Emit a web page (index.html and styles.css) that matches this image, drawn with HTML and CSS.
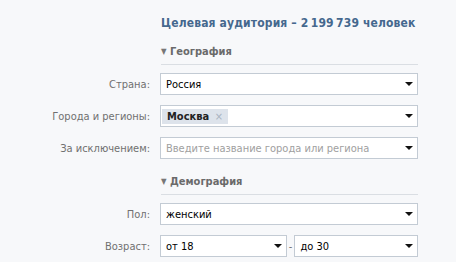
FILE: index.html
```html
<!DOCTYPE html>
<html lang="ru">
<head>
<meta charset="utf-8">
<link rel="stylesheet" href="styles.css">
</head>
<body>
<div class="page">
  <div class="title">Целевая аудитория – 2&thinsp;199&thinsp;739 человек</div>

  <div class="section">
    <div class="section-head"><span class="tri">▼</span> География</div>
    <div class="row">
      <div class="label">Страна:</div>
      <div class="select"><span class="val">Россия</span><span class="arrow"></span></div>
    </div>
    <div class="row">
      <div class="label">Города и регионы:</div>
      <div class="select"><span class="token">Москва <span class="x">×</span></span><span class="arrow"></span></div>
    </div>
    <div class="row">
      <div class="label">За исключением:</div>
      <div class="select"><span class="val ph">Введите название города или региона</span><span class="arrow"></span></div>
    </div>
  </div>

  <div class="section">
    <div class="section-head"><span class="tri">▼</span> Демография</div>
    <div class="row">
      <div class="label">Пол:</div>
      <div class="select"><span class="val">женский</span><span class="arrow"></span></div>
    </div>
    <div class="row">
      <div class="label">Возраст:</div>
      <div class="pair">
        <div class="select small"><span class="val">от 18</span><span class="arrow"></span></div>
        <span class="dash">-</span>
        <div class="select small"><span class="val">до 30</span><span class="arrow"></span></div>
      </div>
    </div>
  </div>
</div>
</body>
</html>
```
FILE: styles.css
```css
html, body {
  margin: 0;
  padding: 0;
  background: #f7f8fa;
}
body {
  font-family: "DejaVu Sans Condensed", "DejaVu Sans", sans-serif;
  font-size: 11px;
  color: #000;
}
.page {
  width: 456px;
  height: 262px;
  padding-top: 16px;
  box-sizing: border-box;
}
.title {
  margin-left: 161px;
  font-weight: bold;
  font-size: 12px;
  letter-spacing: 0.15px;
  color: #45688e;
  line-height: 15px;
  height: 15px;
}
.section-head {
  margin-left: 161px;
  width: 257px;
  margin-top: 14px;
  padding-bottom: 5px;
  border-bottom: 1px solid #dadee3;
  font-weight: bold;
  color: #6a6a6a;
  font-size: 11px;
  line-height: 14px;
}
.section + .section .section-head {
  margin-top: 16px;
}
.tri {
  font-size: 8px;
  vertical-align: 1px;
  color: #777;
}
.row {
  display: flex;
  align-items: center;
  margin-top: 8px;
  height: 22px;
}
.row + .row {
  margin-top: 10px;
}
.label {
  width: 150px;
  text-align: right;
  color: #707070;
  margin-right: 10px;
  flex: none;
}
.select {
  width: 258px;
  height: 22px;
  box-sizing: border-box;
  border: 1px solid #c3cbd4;
  background: #fff;
  display: flex;
  align-items: center;
  padding-left: 5px;
}
.val {
  flex: 1;
  white-space: nowrap;
  overflow: hidden;
}
.ph {
  color: #a0a0a0;
}
.arrow {
  width: 0;
  height: 0;
  border-left: 4px solid transparent;
  border-right: 4px solid transparent;
  border-top: 4px solid #111;
  margin-right: 4px;
  margin-left: auto;
  flex: none;
}
.token {
  background: #dde3eb;
  font-weight: bold;
  color: #222;
  padding: 0 5px 0 5px;
  height: 15px;
  line-height: 15px;
  margin-left: -4px;
}
.token .x {
  color: #a9b3c1;
  font-weight: normal;
  margin-left: 2px;
}
.pair {
  display: flex;
  align-items: center;
  width: 258px;
}
.select.small {
  width: 127px;
}
.dash {
  width: 6px;
  text-align: center;
  color: #707070;
  margin-right: -3px;
  margin-left: 1px;
}
.pair .select.small:last-child {
  width: 124px;
  margin-left: 4px;
}
```
